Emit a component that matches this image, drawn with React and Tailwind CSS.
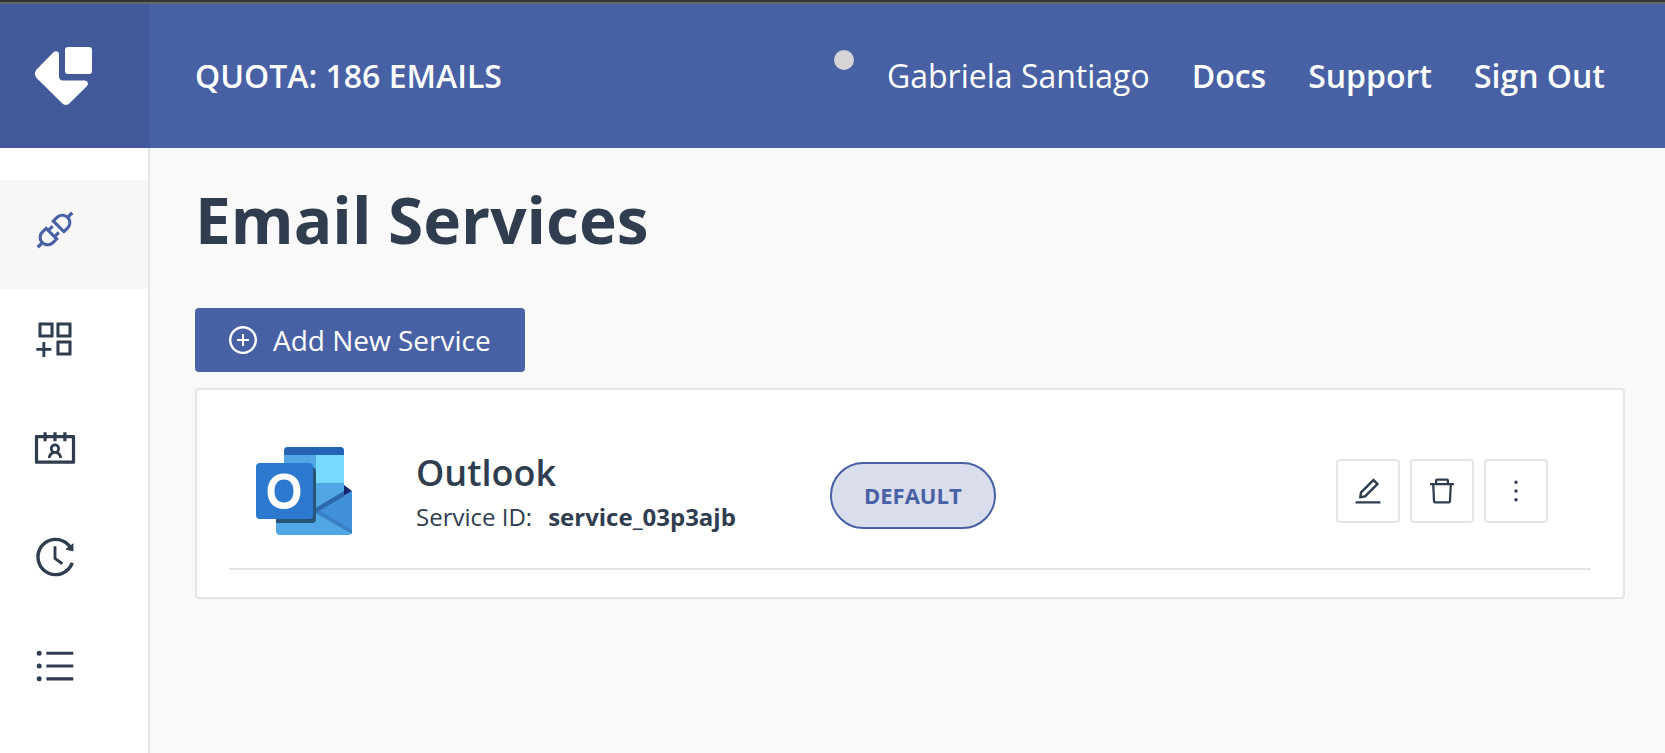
import {
  AiOutlineApi,
  AiOutlineAppstoreAdd,
  AiOutlineContacts,
  AiOutlineDelete,
  AiOutlineEdit,
  AiOutlineHistory,
  AiOutlineMore,
  AiOutlinePlusCircle,
  AiOutlineUnorderedList,
} from "react-icons/ai";

const navItems = [
  { label: "Email Services", Icon: AiOutlineApi, active: true },
  { label: "Email Templates", Icon: AiOutlineAppstoreAdd },
  { label: "Contacts", Icon: AiOutlineContacts },
  { label: "Email History", Icon: AiOutlineHistory },
  { label: "Events", Icon: AiOutlineUnorderedList },
];

const actions = [
  { label: "Edit service", Icon: AiOutlineEdit },
  { label: "Delete service", Icon: AiOutlineDelete },
  { label: "More actions", Icon: AiOutlineMore },
];

function Logo() {
  return (
    <svg viewBox="0 0 57 58" className="h-[58px] w-[57px]" fill="#fff" aria-hidden="true">
      <rect x="30" y="0" width="27" height="27" rx="3" />
      <path d="M18.5 5.3C20.7 3.1 24 4.3 24 7.3V29.5C24 32 25.5 33.5 28 33.5H49.5C53 33.5 54 37 51.8 39.3L34.6 56.3C32.4 58.4 29.4 58.4 27.2 56.3L1.8 31.2C-0.6 28.8-0.6 24.8 1.8 22.2Z" />
    </svg>
  );
}

function OutlookLogo() {
  return (
    <svg viewBox="0 0 96 88" className="h-[88px] w-[96px]" aria-hidden="true">
      <path d="M28 8H88V60H28Z" fill="#50a7e3" />
      <path d="M60 8H88V36H60Z" fill="#76d9ff" />
      <path d="M28 8V3.500Q28 0 31.500 0H84.500Q88 0 88 3.500V8Z" fill="#2564b5" />
      <path d="M88 38L96 44L88 50Z" fill="#14246b" />
      <path d="M96 44V84Q96 88 92 88H24Q20 88 20 84V40H88V49Z" fill="#50a7e3" />
      <path d="M96 44V85L59 64Z" fill="#4190da" />
      <path d="M60 61.500L96 83V87L58 65Z" fill="#3a80c6" />
      <path d="M58 62L88 44V49.500L59 66Z" fill="#2c68ab" />
      <path d="M20 72H50Q56 72 56 68V20Q60 21 60 24V72Q60 76 56 76H20Z" fill="#285476" />
      <rect x="0" y="16" width="57" height="56" rx="4" fill="#2d79cf" />
      <path
        fillRule="evenodd"
        fill="#fff"
        d="M28 26.500C38.500 26.500 44.500 33.500 44.500 44C44.500 55 38 62 28 62C17.800 62 11.500 55 11.500 44.500C11.500 33.500 18 26.500 28 26.500ZM28 32.500C22 32.500 18.500 37 18.500 44C18.500 51 22 55.500 28 55.500C34 55.500 37.500 51 37.500 44C37.500 37 34 32.500 28 32.500Z"
      />
    </svg>
  );
}

export default function App() {
  return (
    <div className="flex min-h-screen flex-col bg-[#f9f9f9] font-['Open_Sans','Noto_Sans',sans-serif] text-[#2f3d4f]">
      <div className="h-1 border-b-2 border-[#666] bg-[#333]" />
      <header className="flex h-36 bg-[#4861a5] text-[32px] leading-[44px] text-white">
        <a href="#home" aria-label="Home" className="flex w-[150px] shrink-0 items-center bg-[#425a99] pl-[35px]">
          <Logo />
        </a>
        <div className="flex grow items-center justify-between pr-[60px] pl-[45px]">
          <span className="font-semibold">QUOTA: 186 EMAILS</span>
          <nav className="flex items-center gap-[42px]">
            <span className="flex items-center gap-[33px]">
              <span className="mb-8 size-5 rounded-full bg-[#d5d5d5]" />
              Gabriela Santiago
            </span>
            <a href="#docs" className="font-semibold">Docs</a>
            <a href="#support" className="font-semibold">Support</a>
            <a href="#signout" className="font-semibold">Sign Out</a>
          </nav>
        </div>
      </header>
      <div className="flex grow">
        <nav className="w-[150px] shrink-0 border-r-2 border-[#e5e5e5] bg-white pt-8">
          {navItems.map(({ label, Icon, active }) => (
            <a
              key={label}
              href="#"
              aria-label={label}
              className={
                active
                  ? "flex h-[109px] items-center bg-[#f7f7f7] pb-[10px] pl-8 text-[#4861a5]"
                  : "flex h-[109px] items-center pb-[10px] pl-8"
              }
            >
              <Icon size={46} />
            </a>
          ))}
        </nav>
        <main className="min-w-0 grow pt-[30px] pr-10 pl-[45px]">
          <h1 className="text-[64px] leading-[84px] font-bold">Email Services</h1>
          <button className="mt-[46px] flex h-16 items-center gap-[14px] rounded bg-[#4861a5] pr-[34px] pl-8 text-[28px] leading-[38px] text-white">
            <AiOutlinePlusCircle size={32} />
            Add New Service
          </button>
          <section className="mt-4 rounded border-2 border-[#e5e5e5] bg-white px-8 pb-[27px]">
            <div className="flex h-[180px] items-center border-b-2 border-[#e5e5e5] pr-[43px] pl-[27px] pt-6">
              <div className="w-40 shrink-0">
                <OutlookLogo />
              </div>
              <div className="w-[414px] shrink-0 pt-[2px]">
                <h2 className="text-4xl leading-[50px] font-semibold">Outlook</h2>
                <p className="flex gap-4 text-2xl leading-[38px]">
                  <span>Service ID:</span>
                  <strong className="font-bold">service_03p3ajb</strong>
                </p>
              </div>
              <span className="mt-2 rounded-full border-2 border-[#4861a5] bg-[#dadeec] px-8 py-4 text-[22px] leading-[31px] font-bold text-[#4861a5]">
                DEFAULT
              </span>
              <div className="ml-auto flex gap-[10px]">
                {actions.map(({ label, Icon }) => (
                  <button
                    key={label}
                    aria-label={label}
                    className="flex size-16 items-center justify-center rounded border-2 border-[#e5e5e5] bg-white"
                  >
                    <Icon size={32} />
                  </button>
                ))}
              </div>
            </div>
          </section>
        </main>
      </div>
    </div>
  );
}
